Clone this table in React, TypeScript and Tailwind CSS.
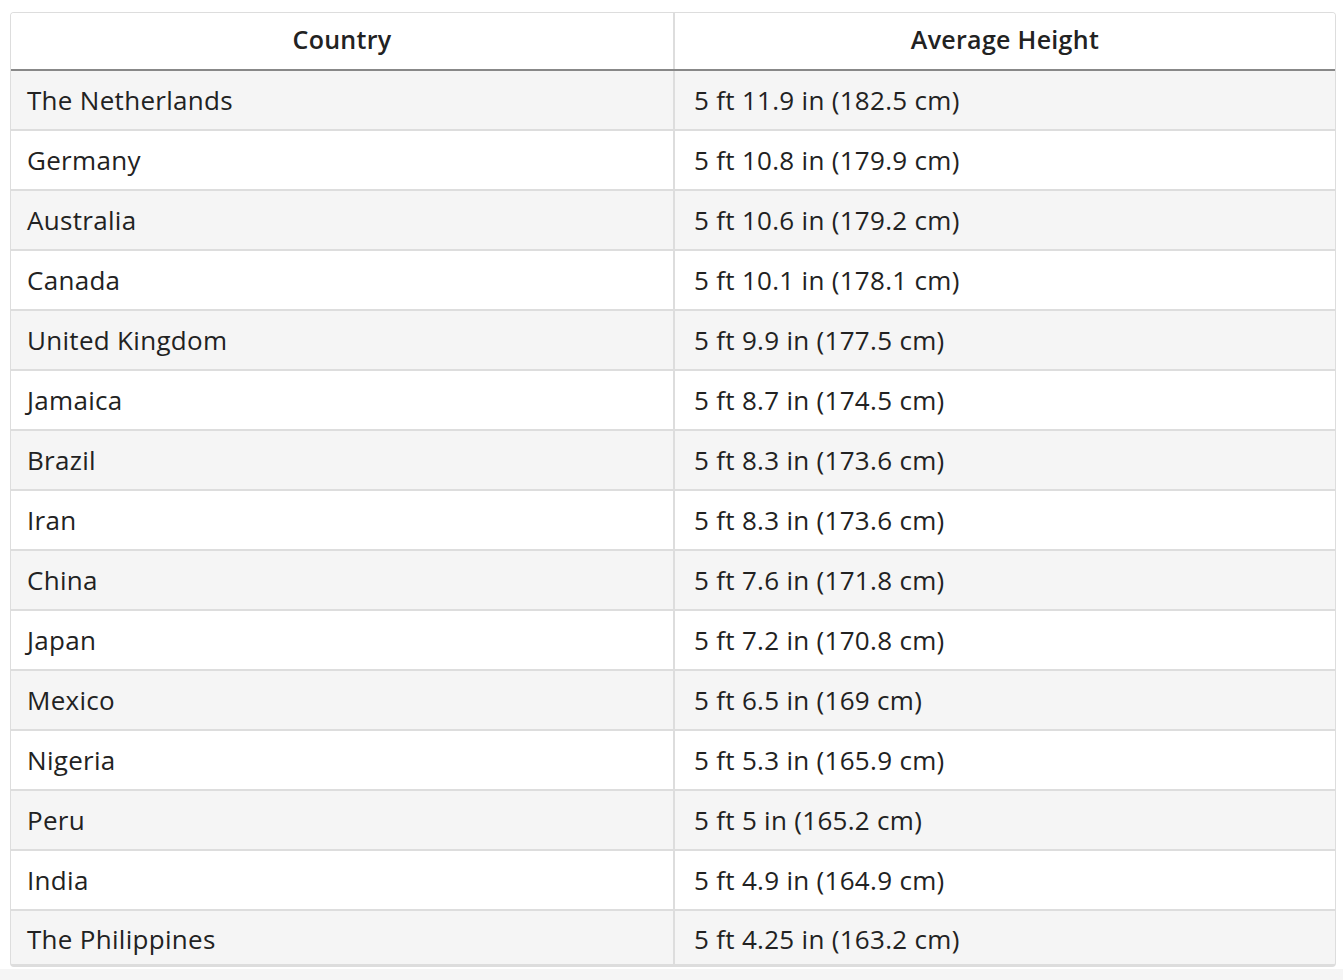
const rows: [string, string][] = [
  ["The Netherlands", "5 ft 11.9 in (182.5 cm)"],
  ["Germany", "5 ft 10.8 in (179.9 cm)"],
  ["Australia", "5 ft 10.6 in (179.2 cm)"],
  ["Canada", "5 ft 10.1 in (178.1 cm)"],
  ["United Kingdom", "5 ft 9.9 in (177.5 cm)"],
  ["Jamaica", "5 ft 8.7 in (174.5 cm)"],
  ["Brazil", "5 ft 8.3 in (173.6 cm)"],
  ["Iran", "5 ft 8.3 in (173.6 cm)"],
  ["China", "5 ft 7.6 in (171.8 cm)"],
  ["Japan", "5 ft 7.2 in (170.8 cm)"],
  ["Mexico", "5 ft 6.5 in (169 cm)"],
  ["Nigeria", "5 ft 5.3 in (165.9 cm)"],
  ["Peru", "5 ft 5 in (165.2 cm)"],
  ["India", "5 ft 4.9 in (164.9 cm)"],
  ["The Philippines", "5 ft 4.25 in (163.2 cm)"],
];

export default function App() {
  return (
    <div className="min-h-[980px] bg-white font-['Open_Sans',sans-serif] text-[#222]">
      <div className="pt-3 pl-[10px] pr-[7px]">
        {/* Height table */}
        <div className="overflow-hidden rounded-[4px] border border-b-[3px] border-[#dddddd]">
          <div className="grid grid-cols-[664px_1fr] h-[58px] border-b-2 border-[#888888] bg-white">
            <div className="flex items-center justify-center border-r-2 border-[#dddddd] pb-[2px] text-[25px] font-semibold tracking-[0.3px]">
              Country
            </div>
            <div className="flex items-center justify-center pb-[2px] text-[25px] font-semibold tracking-[0.3px]">
              Average Height
            </div>
          </div>
          {rows.map(([country, height], i) => {
            const last = i === rows.length - 1;
            return (
              <div
                key={country}
                className={`grid grid-cols-[664px_1fr] text-[26px] tracking-[0.3px] ${
                  i % 2 === 0 ? "bg-[#f5f5f5]" : "bg-white"
                } ${last ? "h-[53px]" : "h-[60px] border-b-2 border-[#dddddd]"}`}
              >
                <div className={`flex items-center border-r-2 border-[#dddddd] pl-4 ${last ? "pt-[3px]" : ""}`}>
                  {country}
                </div>
                <div className={`flex items-center pl-[19px] ${last ? "pt-[3px]" : ""}`}>{height}</div>
              </div>
            );
          })}
        </div>
      </div>
      <div className="mt-[2px] h-[12px] bg-[#f5f5f5]" />
    </div>
  );
}
